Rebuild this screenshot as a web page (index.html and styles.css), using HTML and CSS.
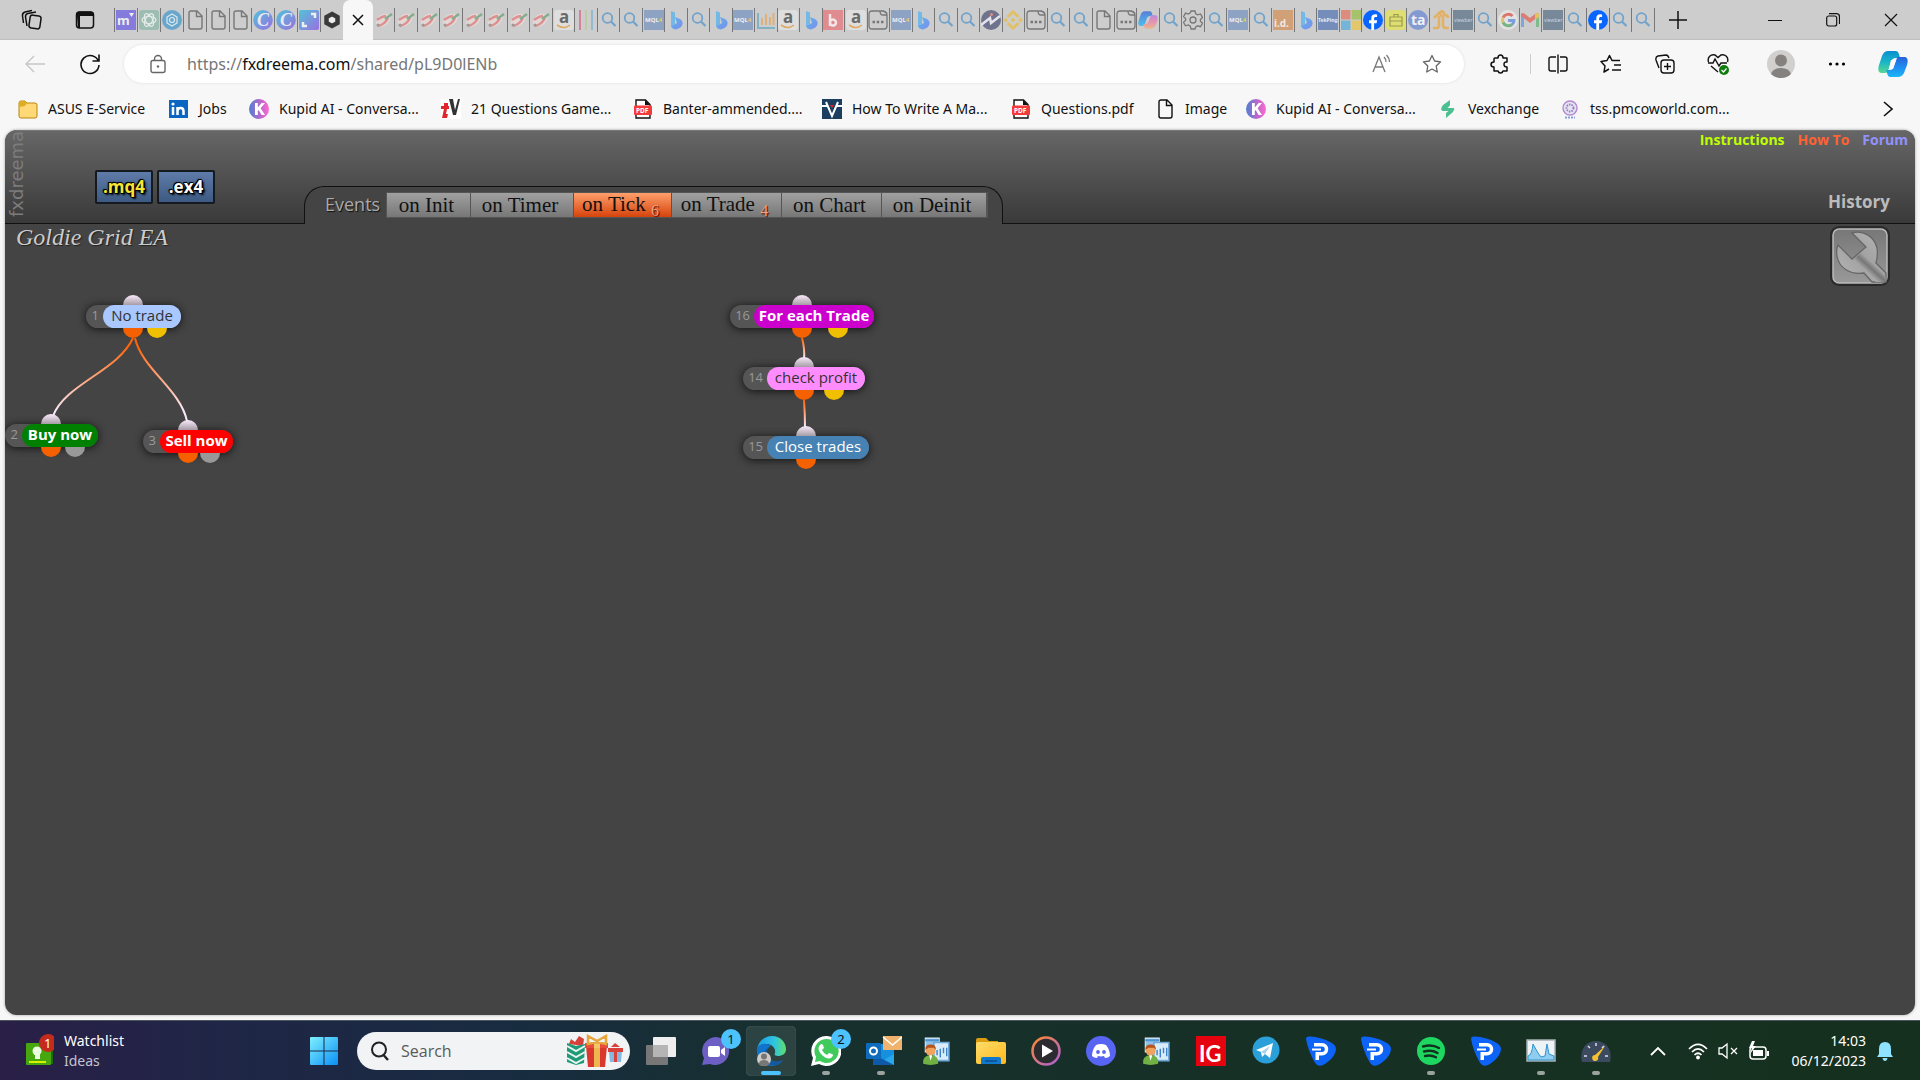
FILE: index.html
```html
<!DOCTYPE html>
<html lang="en">
<head>
<meta charset="utf-8">
<title>Goldie Grid EA - fxDreema</title>
<link rel="stylesheet" href="styles.css">
</head>
<body>
<svg class="defs" aria-hidden="true">
  <defs>
    <linearGradient id="g-bing" x1="0" y1="0" x2="1" y2="1"><stop offset="0" stop-color="#5fb4f0"/><stop offset="1" stop-color="#7a8fe8"/></linearGradient>
    <linearGradient id="g-canva" x1="0" y1="0" x2="1" y2="1"><stop offset="0" stop-color="#52c3d8"/><stop offset="1" stop-color="#9a6fe0"/></linearGradient>
    <linearGradient id="g-kupid" x1="0" y1="0" x2="1" y2="0"><stop offset="0" stop-color="#4f7fd0"/><stop offset=".6" stop-color="#c266cc"/><stop offset="1" stop-color="#ff6bd0"/></linearGradient>
    <linearGradient id="g-cop1" x1="0" y1="0" x2="0" y2="1"><stop offset="0" stop-color="#0b8fd0"/><stop offset=".5" stop-color="#19b5c8"/><stop offset="1" stop-color="#57d98e"/></linearGradient>
    <linearGradient id="g-cop2" x1="0" y1="0" x2="0" y2="1"><stop offset="0" stop-color="#2a5fd8"/><stop offset=".5" stop-color="#1d8cf0"/><stop offset="1" stop-color="#1fb6f5"/></linearGradient>
    <linearGradient id="g-cop3" x1="0" y1="0" x2="0" y2="1"><stop offset="0" stop-color="#b06fe0"/><stop offset=".5" stop-color="#f07aa8"/><stop offset="1" stop-color="#f5b070"/></linearGradient>
    <linearGradient id="g-win" x1="0" y1="0" x2="1" y2="1"><stop offset="0" stop-color="#7ef0ff"/><stop offset="1" stop-color="#0a8ff5"/></linearGradient>
    <linearGradient id="g-edge" x1="0" y1="0" x2="1" y2="0"><stop offset="0" stop-color="#1a9be8"/><stop offset=".6" stop-color="#2fc4e0"/><stop offset="1" stop-color="#5fe06a"/></linearGradient>
    <linearGradient id="g-wrench" x1="0" y1="0" x2="0" y2="1"><stop offset="0" stop-color="#777"/><stop offset="1" stop-color="#999"/></linearGradient>
    <linearGradient id="g-wrench2" x1="0" y1="1" x2="1" y2="0"><stop offset="0" stop-color="#b8b8b8"/><stop offset=".5" stop-color="#a0a0a0"/><stop offset="1" stop-color="#b8b8b8"/></linearGradient>
    <linearGradient id="g-shaft" x1="0" y1="1" x2="1" y2="0"><stop offset=".35" stop-color="#b0b0b0"/><stop offset=".5" stop-color="#777"/><stop offset=".65" stop-color="#aaa"/></linearGradient>
    <linearGradient id="g-folder" x1="0" y1="0" x2="1" y2="1"><stop offset="0" stop-color="#ffdc6b"/><stop offset="1" stop-color="#ffb91a"/></linearGradient>
    <linearGradient id="g-media" x1="0" y1="0" x2="1" y2="1"><stop offset="0" stop-color="#ff8a30"/><stop offset="1" stop-color="#a860d8"/></linearGradient>
    <linearGradient id="g-link" gradientUnits="userSpaceOnUse" x1="0" y1="114" x2="0" y2="196"><stop offset=".1" stop-color="#ff6408"/><stop offset=".9" stop-color="#fbeafb"/></linearGradient>
    <linearGradient id="g-link2" gradientUnits="userSpaceOnUse" x1="0" y1="114" x2="0" y2="135"><stop offset="0" stop-color="#ff6408"/><stop offset="1" stop-color="#fbeafb"/></linearGradient>
    <linearGradient id="g-link3" gradientUnits="userSpaceOnUse" x1="0" y1="176" x2="0" y2="203"><stop offset="0" stop-color="#ff6408"/><stop offset="1" stop-color="#fbeafb"/></linearGradient>
    <symbol id="doc" viewBox="0 0 20 20"><path d="M4 3q0-2 2-2h6l5 5v11q0 2-2 2H6q-2 0-2-2zM11.500 1v5.500h5.500" fill="none" stroke="currentColor" stroke-width="1.400"/></symbol>
    <symbol id="mag" viewBox="0 0 20 20"><circle cx="8.500" cy="8" r="4.800" fill="none" stroke="#70a3cc" stroke-width="1.800"/><path d="M12 11.500l4.500 4.500" stroke="#70a3cc" stroke-width="2.200"/></symbol>
    <symbol id="mql" viewBox="0 0 20 20"><path d="M0 0h20v20H0z" fill="#8ea2c4"/><text x="1" y="12" font-size="6" font-weight="bold" fill="#eee">MQL<tspan fill="#e6cf5a">4</tspan></text></symbol>
    <symbol id="bing" viewBox="0 0 20 20"><path d="M5 1l4 1.500v11L6 17l-1-1z" fill="#74b9e6"/><path d="M9 7l5 2q3 2 2.500 5c-.5 3-4 5-7 5.500Q6 19 5 16l6-3z" fill="url(#g-bing)"/></symbol>
    <symbol id="amz" viewBox="0 0 20 20"><rect width="20" height="20" rx="3" fill="#dedede"/><text x="5" y="13" font-size="17" font-weight="bold" fill="#6a6a6a">a</text><path d="M3 15q7 5 13 0" fill="none" stroke="#e0a861" stroke-width="1.600"/></symbol>
    <symbol id="winico" viewBox="0 0 20 20"><path d="M11 1h3q4 0 5 3.500M12 1q0 4 3 4h4M16 1.500Q19 2 19 5v11q0 3-3 3H4q-3 0-3-3V4q0-3 3-3h12" fill="none" stroke="#777" stroke-width="1.300"/><path d="M4.500 12h2.500M8.700 12h2.500M13 12h2.500" stroke="#777" stroke-width="2.400"/></symbol>
    <symbol id="pen" viewBox="0 0 20 20"><path d="M2 14C2 7 7 3 13 4l4 1c0 7-5 12-12 12z" fill="#e2d9d7"/><path d="M3 10C6 8 8 6 12 6M4 16c5-1 8-4 10-8" stroke="#de9090" stroke-width="2.400" fill="none"/><path d="M11 9l7-5" stroke="#84ad8f" stroke-width="2.600"/><circle cx="4" cy="15" r="1.500" fill="#999"/></symbol>
    <symbol id="canva" viewBox="0 0 20 20"><ellipse cx="10" cy="10" rx="9.800" ry="10" fill="url(#g-canva)"/><text x="4" y="16" font-size="18" font-weight="bold" fill="#e8e8f4" class="script">C</text></symbol>
    <symbol id="fb" viewBox="0 0 20 20"><circle cx="10" cy="10" r="10" fill="#0866ff"/><path d="M8.300 19.900v-6.700H6V10.300h2.300V8.500c0-3 1.400-4.300 4-4.300q1 0 1.800.2V7h-1.300c-1.300 0-1.700.6-1.700 1.800v1.500h3l-.5 2.900h-2.500v6.700z" fill="#fff"/></symbol>
    <symbol id="view" viewBox="0 0 20 20"><path d="M0 0h20v20H0z" fill="#778899"/><text x="1" y="12" font-size="5" fill="#d0d5da">viewber</text></symbol>
    <symbol id="copilot" viewBox="0 0 30 28"><path d="M10 1h8q2 0 3 3l1 4h-4q-4 0-5 4l-3 9q-1 2-3 2H3q-4-1-2-8l3-9Q6 1 10 1z" fill="url(#g-cop1)"/><path d="M20 27h-8q-2 0-3-4l-1-3h4q3 0 4-4l3-8q1-2 3-1h5q4 1 2 8l-3 8q-2 4-6 4z" fill="url(#g-cop2)"/><path d="M13 10h5l-3 9h-4z" fill="#fff"/></symbol>
    <symbol id="pdf" viewBox="0 0 20 20"><path d="M3 1h9.500L17 5.500V19H3z" fill="#fff" stroke="#111" stroke-width="1.400"/><path d="M12 1v5h5z" fill="#111"/><rect x="1" y="6.500" width="18" height="9.500" rx="1" fill="#f43b3b"/><text x="3" y="13.600" font-size="6.500" font-weight="bold" fill="#fff">PDF</text></symbol>
    <symbol id="kupid" viewBox="0 0 20 20"><circle cx="10" cy="10" r="10" fill="url(#g-kupid)"/><path d="M6 4h2.800v4.600L12.600 4H16l-4.400 5.300L16 16h-3.400l-3-5-.8 1v4H6z" fill="#fff"/></symbol>
    <symbol id="people" viewBox="0 0 28 28"><path d="M4 2h13v13H4z" fill="#8fc0ea" stroke="#dff0fb"/><path d="M4 3h13v2H4zM12 6h14v2H12z" fill="#4d93cf"/><path d="M12 6h14v17H12z" fill="#d8ecfa" stroke="#6fa9da" stroke-width="1.500"/><path d="M15 18v-5M18 20v-8M21 16v-5M24 19v-8" stroke="#3d82c4" stroke-width="1.300"/><circle cx="9" cy="14" r="4.500" fill="#f0a35e"/><path d="M4 13q0-5 5-5t5 5l-2-2H7z" fill="#b5531a"/><path d="M2 26q-1-8 7-8t7 8q-7 2-14 0z" fill="#71b043"/><path d="M7.500 18L9 23l1.500-5z" fill="#fff"/></symbol>
    <symbol id="pp" viewBox="0 0 30 30"><path d="M0 3q0-3 4-2.500Q15 1 24 6q6 3 6 7c0 6-7 13-13 16-4 2-7 0-9-4Q2 14 0 3z" fill="#0c63f5"/><path d="M8 7h8a6 6 0 0 1 0 12.500h-3V24H9.500v-8H16a2.600 2.600 0 0 0 0-5.500H8z" fill="#fff"/><path d="M6 12.500h9v2H6z" fill="#fff"/></symbol>
  </defs>
</svg>

<header class="browser">
  <div class="titlebar">
    <div class="title-left">
      <button class="ico" aria-label="Workspaces"><svg width="22" height="22" viewBox="0 0 22 22"><g fill="none" stroke="#111" stroke-width="1.500"><rect x="8.500" y="6.500" width="11" height="13" rx="2.500" transform="rotate(8 14 13)"/><path d="M6 17l-1.500-9q-.3-3 2.500-3.500l8-1.500M2.500 14L1.500 7Q1 4 4 3l7-1.500"/></g></svg></button>
      <button class="ico" aria-label="Tab actions"><svg width="20" height="20" viewBox="0 0 20 20"><rect x="1.500" y="2" width="17" height="16" rx="3" fill="none" stroke="#111" stroke-width="1.500"/><path d="M1 6V5q0-3.500 3.500-3.500h11Q19 1.500 19 5v1zM2 6h3v12H3z" fill="#111"/></svg></button>
    </div>
    <div class="tabs tabs-a">
      <i><svg viewBox="0 0 20 20"><path d="M0 0h20v20H0z" fill="#857bdc"/><text x="1" y="15" font-size="13" font-weight="bold" fill="#eee">m</text><path d="M13 3h5l-2.500 4z" fill="#eee"/></svg></i>
      <i><svg viewBox="0 0 20 20"><rect width="20" height="20" rx="3" fill="#9dbcb2"/><g fill="none" stroke="#e5ecea" stroke-width="1.200"><ellipse cx="10" cy="10" rx="7" ry="3.500"/><ellipse cx="10" cy="10" rx="7" ry="3.500" transform="rotate(60 10 10)"/><ellipse cx="10" cy="10" rx="7" ry="3.500" transform="rotate(120 10 10)"/></g></svg></i>
      <i><svg viewBox="0 0 20 20"><circle cx="10" cy="10" r="10" fill="#69a6cc"/><g fill="none" stroke="#dde8ef" stroke-width="1.200"><path d="M10 4l5 3v6l-5 3-5-3V7z"/><circle cx="10" cy="10" r="2.500"/></g></svg></i>
      <i><svg class="gray"><use href="#doc"/></svg></i>
      <i><svg class="gray"><use href="#doc"/></svg></i>
      <i><svg class="gray"><use href="#doc"/></svg></i>
      <i><svg><use href="#canva"/></svg></i>
      <i><svg><use href="#canva"/></svg></i>
      <i><svg viewBox="0 0 20 20"><rect width="20" height="20" rx="2" fill="url(#g-canva)"/><path d="M12 4h4v4M4 12v4h4" fill="none" stroke="#eee" stroke-width="2.500"/></svg></i>
      <i><svg viewBox="0 0 20 20"><path d="M10 4l5.500 3v6L10 16l-5.500-3V7z" fill="#eee" stroke="#3a3a3a" stroke-width="4.500"/></svg></i>
    </div>
    <div class="tab-active"><button class="ico" aria-label="Close tab"><svg width="12" height="12" viewBox="0 0 12 12"><path d="M1 1l10 10M11 1L1 11" stroke="#111" stroke-width="1.500"/></svg></button></div>
    <div class="tabs tabs-b">
      <i><svg><use href="#pen"/></svg></i>
      <i><svg><use href="#pen"/></svg></i>
      <i><svg><use href="#pen"/></svg></i>
      <i><svg><use href="#pen"/></svg></i>
      <i><svg><use href="#pen"/></svg></i>
      <i><svg><use href="#pen"/></svg></i>
      <i><svg><use href="#pen"/></svg></i>
      <i><svg><use href="#pen"/></svg></i>
      <i><svg><use href="#amz"/></svg></i>
      <i><svg viewBox="0 0 20 20"><path d="M4 0v20" stroke="#d8688c" stroke-width="1.500"/><path d="M10 0v20" stroke="#b5cf98" stroke-width="1.500"/><path d="M16 0v20" stroke="#7eb5d4" stroke-width="1.500"/></svg></i>
      <i><svg><use href="#mag"/></svg></i>
      <i><svg><use href="#mag"/></svg></i>
      <i><svg><use href="#mql"/></svg></i>
      <i><svg><use href="#bing"/></svg></i>
      <i><svg><use href="#mag"/></svg></i>
      <i><svg><use href="#bing"/></svg></i>
      <i><svg><use href="#mql"/></svg></i>
      <i><svg viewBox="0 0 20 20"><path d="M2 3v15h17" fill="none" stroke="#80b2c4" stroke-width="2"/><path d="M6 15V8M10 15V4M14 15V7M17.500 15V3" stroke="#ddb07c" stroke-width="2"/></svg></i>
      <i><svg><use href="#amz"/></svg></i>
      <i><svg><use href="#bing"/></svg></i>
      <i><svg viewBox="0 0 20 20"><path d="M0 0h20v20H0z" fill="#df8b90"/><path d="M7 4v12M7 12.500a3 3 0 1 1 0 .1" fill="none" stroke="#f2e6e6" stroke-width="2.500"/></svg></i>
      <i><svg><use href="#amz"/></svg></i>
      <i><svg><use href="#winico"/></svg></i>
      <i><svg><use href="#mql"/></svg></i>
      <i><svg><use href="#bing"/></svg></i>
      <i><svg><use href="#mag"/></svg></i>
      <i><svg><use href="#mag"/></svg></i>
      <i><svg viewBox="0 0 20 20"><circle cx="10" cy="10" r="10" fill="#70738d"/><path d="M0 15l9-7 1 5 9-7" fill="none" stroke="#e4e4ea" stroke-width="2.500"/><circle cx="10.500" cy="4.500" r="1.500" fill="#e08c7c"/></svg></i>
      <i><svg viewBox="0 0 20 20"><path d="M10 7.500l2.500 2.500-2.500 2.500L7.500 10zM2.500 7.500L5 10l-2.500 2.500L0 10zM17.500 7.500L20 10l-2.500 2.500L15 10z" fill="#e0c069"/><path d="M4.500 7L10 1.800 15.500 7M4.500 13l5.500 5.200 5.500-5.200" fill="none" stroke="#e0c069" stroke-width="3"/></svg></i>
      <i><svg><use href="#winico"/></svg></i>
      <i><svg><use href="#mag"/></svg></i>
      <i><svg><use href="#mag"/></svg></i>
      <i><svg class="gray"><use href="#doc"/></svg></i>
      <i><svg><use href="#winico"/></svg></i>
      <i><svg class="faded" viewBox="0 0 30 28"><path d="M10 1h8q2 0 3 3l1 4h-4q-4 0-5 4l-3 9q-1 2-3 2H3q-4-1-2-8l3-9Q6 1 10 1z" fill="url(#g-cop2)"/><path d="M20 27h-8q-2 0-3-4l-1-3h4q3 0 4-4l3-8q1-2 3-1h5q4 1 2 8l-3 8q-2 4-6 4z" fill="url(#g-cop3)"/></svg></i>
      <i><svg><use href="#mag"/></svg></i>
      <i><svg viewBox="0 0 20 20"><path d="M8 1h4l.7 2.800 2 1.100 2.800-.9 2 3.500-2.100 2v1.700l2.100 2-2 3.500-2.800-.9-2 1.200L12 19H8l-.7-2.900-2-1.200-2.800.9-2-3.500 2.100-2V8.600l-2.100-2 2-3.500 2.800.9 2-1.100z" fill="none" stroke="#777" stroke-width="1.300"/><circle cx="10" cy="10" r="3" fill="none" stroke="#777" stroke-width="1.300"/></svg></i>
      <i><svg><use href="#mag"/></svg></i>
      <i><svg><use href="#mql"/></svg></i>
      <i><svg><use href="#mag"/></svg></i>
      <i><svg viewBox="0 0 20 20"><path d="M0 0h20v20H0z" fill="#d1a077"/><text x="1" y="17" font-size="10" font-weight="bold" fill="#f0e8e0">i.d.</text></svg></i>
      <i><svg><use href="#bing"/></svg></i>
      <i><svg viewBox="0 0 20 20"><path d="M0 0h20v20H0z" fill="#748dbb"/><text x="0" y="12" font-size="5" font-weight="bold" fill="#e8ecf4">TekPing</text></svg></i>
      <i><svg viewBox="0 0 20 20"><path d="M0 0h9.500v9.500H0z" fill="#db8c7c"/><path d="M10.500 0H20v9.500h-9.500z" fill="#a6c36b"/><path d="M0 10.500h9.500V20H0z" fill="#74b4d6"/><path d="M10.500 10.500H20V20h-9.500z" fill="#e3c76c"/></svg></i>
      <i><svg><use href="#fb"/></svg></i>
      <i><svg viewBox="0 0 20 20"><rect width="20" height="20" rx="4" fill="#dede72"/><path d="M4 7h12v9H4zM8 7V4.500h4V7M4 11h12" fill="none" stroke="#9a9a50" stroke-width="1.200"/></svg></i>
      <i><svg viewBox="0 0 20 20"><circle cx="10" cy="10" r="10" fill="#839bd2"/><text x="3" y="15" font-size="14" font-weight="bold" fill="#f0f0f4">ta</text></svg></i>
      <i><svg viewBox="0 0 20 20"><path d="M2 18h4q2 0 2-3V6M3 8l5-5 4 4M12 5v10q0 3 3 3h3M12 5h2q3 0 3 3M8 3l3-2 3 3" fill="none" stroke="#e2b165" stroke-width="2.600"/></svg></i>
      <i><svg><use href="#view"/></svg></i>
      <i><svg><use href="#mag"/></svg></i>
      <i><svg viewBox="0 0 20 20"><circle cx="10" cy="10" r="10" fill="#e2e2e2"/><g fill="none" stroke-width="3"><path d="M14.500 6A6 6 0 0 0 5 7.500" stroke="#d9756c"/><path d="M5 7.500a6 6 0 0 0 0 5" stroke="#e3c166"/><path d="M5 12.500a6 6 0 0 0 9 2" stroke="#77b384"/><path d="M14 14.500q2-1.500 2-4h-6" stroke="#7b9fd9"/></g></svg></i>
      <i><svg viewBox="0 0 20 20"><path d="M1 5v12h3V8z" fill="#7ea5dc"/><path d="M16 8v9h3V5z" fill="#7ebc8c"/><path d="M1 6V4q2-2 4 0l5 4 5-4q2-2 4 0v2l-9 7z" fill="#dc7d75"/><path d="M15 4q2-2 4 0v3l-4 3z" fill="#e3c060"/></svg></i>
      <i><svg><use href="#view"/></svg></i>
      <i><svg><use href="#mag"/></svg></i>
      <i><svg><use href="#fb"/></svg></i>
      <i><svg><use href="#mag"/></svg></i>
      <i><svg><use href="#mag"/></svg></i>
    </div>
    <button class="ico new-tab" aria-label="New tab"><svg width="18" height="18" viewBox="0 0 18 18"><path d="M9 0v18M0 9h18" stroke="#111" stroke-width="1.500"/></svg></button>
    <div class="winctl">
      <button class="ico" aria-label="Minimise"><svg width="14" height="14" viewBox="0 0 14 14"><path d="M0 7.500h14" stroke="#111"/></svg></button>
      <button class="ico" aria-label="Restore"><svg width="14" height="14" viewBox="0 0 14 14"><rect x=".7" y="3" width="10" height="10" rx="2" fill="none" stroke="#111" stroke-width="1.200"/><path d="M3 .7h7.500q3 0 3 3V11" fill="none" stroke="#111" stroke-width="1.200"/></svg></button>
      <button class="ico" aria-label="Close"><svg width="14" height="14" viewBox="0 0 14 14"><path d="M1 1l12 12M13 1L1 13" stroke="#111" stroke-width="1.200"/></svg></button>
    </div>
  </div>

  <div class="toolbar">
    <div class="nav">
      <button class="ico" aria-label="Back"><svg width="20" height="18" viewBox="0 0 20 18"><path d="M20 9H1M9 1L1 9l8 8" fill="none" stroke="#c6c6c6" stroke-width="1.400"/></svg></button>
      <button class="ico" aria-label="Refresh"><svg width="22" height="22" viewBox="0 0 22 22"><path d="M19.500 8.500A9 9 0 1 0 20 12M20 1.500V8h-6.500" fill="none" stroke="#111" stroke-width="1.600"/></svg></button>
    </div>
    <div class="urlbar">
      <svg width="16" height="20" viewBox="0 0 16 20"><rect x="1" y="6.500" width="14" height="12" rx="2" fill="none" stroke="#666" stroke-width="1.400"/><path d="M4.500 6.500V5a3.500 3.500 0 0 1 7 0v1.500" fill="none" stroke="#666" stroke-width="1.400"/><circle cx="8" cy="12.500" r="1.200" fill="#666"/></svg>
      <a class="url" href="#">https://<b>fxdreema.com</b>/shared/pL9D0lENb</a>
      <button class="ico" aria-label="Read aloud"><svg width="20" height="20" viewBox="0 0 20 20"><path d="M1 18L7 3l6 15M3 13h8M12 3q2 2 2 5M14.500 1q3 3 3 7" fill="none" stroke="#777" stroke-width="1.300"/></svg></button>
      <button class="ico" aria-label="Favourite"><svg width="20" height="20" viewBox="0 0 20 20"><path d="M10 1.500l2.600 5.500 6 .8-4.400 4.200 1.100 6-5.300-3-5.300 3 1.100-6L1.400 7.800l6-.8z" fill="none" stroke="#666" stroke-width="1.300" stroke-linejoin="round"/></svg></button>
    </div>
    <div class="tools">
      <button class="ico" aria-label="Extensions"><svg width="20" height="20" viewBox="0 0 20 20"><path d="M5 4h3q0-3 2.500-3T13 4h4v4q-3-.5-3 2.300T17 13v4h-4q-.5 2-2.500 2T8 17H4v-4q-3 0-3-2.500T4 8V5q0-1 1-1z" fill="none" stroke="#111" stroke-width="1.500" stroke-linejoin="round"/></svg></button>
      <span class="vline"></span>
      <button class="ico" aria-label="Split screen"><svg width="20" height="20" viewBox="0 0 20 20"><path d="M8 3H3Q1 3 1 5v10q0 2 2 2h5M12 3h5q2 0 2 2v10q0 2-2 2h-5M10 .5v19" fill="none" stroke="#111" stroke-width="1.400"/></svg></button>
      <button class="ico" aria-label="Favourites"><svg width="22" height="20" viewBox="0 0 22 20"><path d="M9 15l-5 3 1-6-4-4.500 6-1 2.500-5 2.500 5h8M14 11h7M12 16h9" fill="none" stroke="#111" stroke-width="1.500" stroke-linejoin="round"/></svg></button>
      <button class="ico" aria-label="Collections"><svg width="20" height="20" viewBox="0 0 20 20"><path d="M4 14L1 6q-.7-3 2-4l8-1q2 0 3 3" fill="none" stroke="#111" stroke-width="1.400"/><rect x="6" y="6" width="13" height="13" rx="3" fill="none" stroke="#111" stroke-width="1.400"/><path d="M12.500 9v7M9 12.500h7" stroke="#111" stroke-width="1.400"/></svg></button>
      <button class="ico" aria-label="Browser essentials"><svg width="22" height="22" viewBox="0 0 22 22"><path d="M1.500 9C0 4 4 1 8 2l3 2.500L14 2c4-1 8 2 6.500 7M1 10h5l2-4 4 7 2-3h6M4 13l7 6" fill="none" stroke="#111" stroke-width="1.400"/><circle cx="17" cy="17" r="5" fill="#107c10"/><path d="M14.500 17l2 2 3-3.500" fill="none" stroke="#fff" stroke-width="1.200"/></svg></button>
      <button class="ico avatar" aria-label="Profile"><svg width="28" height="28" viewBox="0 0 28 28"><circle cx="14" cy="14" r="14" fill="#d2d0ce"/><circle cx="14" cy="10.500" r="6" fill="#84817f"/><path d="M4 24q2-6 10-6t10 6q-4 4-10 4t-10-4z" fill="#84817f"/></svg></button>
      <button class="ico" aria-label="Settings and more"><svg width="18" height="6" viewBox="0 0 18 6"><circle cx="2.500" cy="3" r="1.600"/><circle cx="9" cy="3" r="1.600"/><circle cx="15.500" cy="3" r="1.600"/></svg></button>
      <button class="ico" aria-label="Copilot"><svg width="30" height="28"><use href="#copilot"/></svg></button>
    </div>
  </div>

  <nav class="bookmarks">
    <a href="#" class="bm w1"><svg viewBox="0 0 20 20"><path d="M1 4q0-2 2-2h4l2 2h8q2 0 2 2v11q0 2-2 2H3q-2 0-2-2z" fill="#ffd978" stroke="#b8860b"/><path d="M1 8V4q0-2 2-2h4l2 2-2 3z" fill="#e0ac20"/></svg>ASUS E-Service</a>
    <a href="#" class="bm w2"><svg viewBox="0 0 20 20"><rect y="1" width="19" height="18" fill="#0a66c2"/><path d="M4 8v8M8.500 8v8M8.500 12q0-3 3-3t3 3v4" stroke="#fff" stroke-width="2.500" fill="none"/><circle cx="4" cy="5" r="1.600" fill="#fff"/></svg>Jobs</a>
    <a href="#" class="bm w3"><svg><use href="#kupid"/></svg>Kupid AI - Conversa...</a>
    <a href="#" class="bm w4"><svg viewBox="0 0 20 20"><path d="M0 0h20v20H0z" fill="#fff"/><path d="M0 7h8v3H6l-1 5h2l-1 4H1l2-9H0zM3 4h4v3H3z" fill="#e0262c"/><path d="M8 0h4l2 11 3-11h2l-4 16h-3z" fill="#333"/></svg>21 Questions Game...</a>
    <a href="#" class="bm w5"><svg><use href="#pdf"/></svg>Banter-ammended....</a>
    <a href="#" class="bm w6"><svg viewBox="0 0 20 20"><path d="M0 0h20v20H0z" fill="#1c3f60"/><path d="M4 3l6 14 6-14M0 7h5M15 7h5" fill="none" stroke="#fff" stroke-width="2"/><path d="M8 6h4l-2 3z" fill="#e22"/></svg>How To Write A Ma...</a>
    <a href="#" class="bm w7"><svg><use href="#pdf"/></svg>Questions.pdf</a>
    <a href="#" class="bm w8"><svg><use href="#doc"/></svg>Image</a>
    <a href="#" class="bm w3"><svg><use href="#kupid"/></svg>Kupid AI - Conversa...</a>
    <a href="#" class="bm w9"><svg viewBox="0 0 20 20"><path d="M12 1v5l-4 3h8q0 2-1 4l-7 6v-5l4-3H3q0-3 2-5z" fill="#4bbf90"/><path d="M11 6l-5 5h8l-5 4" fill="none" stroke="#4bbf90" stroke-width="2"/></svg>Vexchange</a>
    <a href="#" class="bm w10"><svg viewBox="0 0 20 20"><circle cx="10" cy="9" r="7" fill="#e7e2f2" stroke="#b38ad0" stroke-width="1.400"/><circle cx="10" cy="9" r="3.500" fill="none" stroke="#8b7fc0" stroke-width="1.800" stroke-dasharray="1.500 1"/><path d="M5 18.500h10" stroke="#8b9fd8" stroke-width="2" stroke-dasharray="2 1"/></svg>tss.pmcoworld.com...</a>
    <button class="ico more" aria-label="More bookmarks"><svg width="10" height="16" viewBox="0 0 10 16"><path d="M1 1l8 7-8 7" fill="none" stroke="#111" stroke-width="1.600"/></svg></button>
  </nav>
</header>

<main class="page">
  <div class="app-head">
    <span class="brand">fxdreema</span>
    <div class="exports"><button class="exp mq">.mq4</button><button class="exp">.ex4</button></div>
    <div class="events">
      <span class="ev-label">Events</span>
      <div class="ev-tabs">
        <button class="e1">on Init</button><button class="e2">on Timer</button><button class="e3 on">on Tick <sub>6</sub></button><button class="e4">on Trade <sub>4</sub></button><button class="e5">on Chart</button><button class="e6">on Deinit</button>
      </div>
    </div>
    <div class="head-right">
      <div class="links"><a class="lk1" href="#">Instructions</a><a class="lk2" href="#">How To</a><a class="lk3" href="#">Forum</a></div>
      <a class="history" href="#">History</a>
    </div>
  </div>
  <div class="canvas">
    <div class="canvas-top">
      <h1>Goldie Grid EA</h1>
      <button class="ico" aria-label="Project options"><svg width="60" height="60" viewBox="0 0 60 60"><rect x="0" y="0" width="60" height="60" rx="9" fill="#2a2a2a"/><rect x="3" y="3" width="54" height="54" rx="6" fill="url(#g-wrench)" stroke="#bbb" stroke-width="1.500"/><path d="M22 7c11-3 22 3 25 15q1 8-1 15l10 10v9H42L34 47C20 49 9 42 7 30q-1-7 1-11l14 14 14-12z" fill="url(#g-wrench2)" stroke="#666" stroke-width="1.300"/><path d="M24 33l7-6 25 24v5H46z" fill="url(#g-shaft)"/></svg></button>
    </div>
    <svg class="wires" aria-hidden="true"><g fill="none" stroke-width="2">
      <path d="M128 114C113 147 60 160 48 192" stroke="url(#g-link)"/>
      <path d="M130 114C137 145 175 165 182 197" stroke="url(#g-link)"/>
      <path d="M797 114Q800 125 799 136" stroke="url(#g-link2)"/>
      <path d="M799 176Q800 190 800 204" stroke="url(#g-link3)"/></g></svg>
    <div class="node n1"><span class="num">1</span><span class="lab">No trade</span><i class="in"></i><i class="out"></i><i class="alt"></i></div>
    <div class="node n2"><span class="num">2</span><span class="lab">Buy now</span><i class="in"></i><i class="out"></i><i class="alt off"></i></div>
    <div class="node n3"><span class="num">3</span><span class="lab">Sell now</span><i class="in"></i><i class="out"></i><i class="alt off"></i></div>
    <div class="node n16"><span class="num">16</span><span class="lab">For each Trade</span><i class="in"></i><i class="out"></i><i class="alt"></i></div>
    <div class="node n14"><span class="num">14</span><span class="lab">check profit</span><i class="in"></i><i class="out"></i><i class="alt"></i></div>
    <div class="node n15"><span class="num">15</span><span class="lab">Close trades</span><i class="in"></i><i class="out"></i></div>
  </div>
</main>

<footer class="taskbar">
  <button class="widget"><svg width="28" height="34" viewBox="0 0 28 34"><path d="M2 11h22l3 3v16H5z" fill="#1f6b12"/><rect y="9" width="25" height="22" rx="1" fill="#46a80e"/><circle cx="11" cy="17" r="4.500" fill="#eaffdf"/><path d="M9 19h5v6H9z" fill="#eaffdf"/><path d="M3 28h17" stroke="#d8f000" stroke-width="2"/><circle cx="22" cy="9" r="9" fill="#c42b1c"/></svg><b>1</b><span>Watchlist<small>Ideas</small></span></button>
  <button class="ico start" aria-label="Start"><svg width="30" height="30" viewBox="0 0 30 30"><path d="M1 2q0-1 1-1h12.500v13.500H1zM15.500 1H28q1 0 1 1v12.500H15.500zM1 15.500h13.500V29H2q-1 0-1-1zM15.500 15.500H29V28q0 1-1 1H15.500z" fill="url(#g-win)"/></svg></button>
  <label class="search"><svg width="20" height="20" viewBox="0 0 20 20"><circle cx="9" cy="8.500" r="7" fill="none" stroke="#222" stroke-width="2"/><path d="M13.500 14l4.500 5" stroke="#222" stroke-width="2.400"/></svg><input type="text" placeholder="Search" aria-label="Search">
    <svg width="58" height="34" viewBox="0 0 58 34"><path d="M3 10l2-5 4 3 4-6 5 3-1 7z" fill="#d8413a"/><path d="M1 9l9 3 9-2-1 19-8 2-9-3z" fill="#1f9a78"/><path d="M1 12l9 5 9-5M1 18l9 5 9-5M1 24l9 5 9-5" stroke="#e8f4ee" stroke-width="2" fill="none"/><path d="M20 12h21l-2 21H22z" fill="#d8382e"/><path d="M28 12h6v21h-6z" fill="#efb64f"/><path d="M19 9h23v5H19z" fill="#e84c3d"/><path d="M28 9h6v5h-6z" fill="#f5c766"/><path d="M22 2l9 5 9-5v8l-9-2-9 2z" fill="none" stroke="#e5a63c" stroke-width="2.500"/><path d="M43 17h13l-1 11H44z" fill="#84b9e4"/><path d="M42 14h15v4H42z" fill="#d8413a"/><path d="M48 17h3v11h-3z" fill="#d8413a"/><path d="M45 13l4-4 5 4z" fill="#d8413a"/></svg></label>
  <div class="apps">
    <button class="app" aria-label="Task view"><svg viewBox="0 0 30 30"><rect x="7" y="1" width="23" height="20" rx="1" fill="#eee"/><rect y="9" width="22" height="20" rx="1" fill="#777"/><path d="M7 9h15v12H7z" fill="#b5b5b5"/></svg></button>
    <button class="app" aria-label="Chat"><svg viewBox="0 0 30 30"><path d="M15 1a14 14 0 1 1-6 27l-8 1 2-7A14 14 0 0 1 15 1z" fill="#6d5fc4"/><rect x="7" y="10" width="12" height="11" rx="2" fill="#fff"/><path d="M20 14l4-3v9l-4-3z" fill="#fff"/></svg><b>1</b></button>
    <button class="app cur" aria-label="Edge"><svg viewBox="0 0 30 30"><path d="M1 14C2 5 9 0 16 0c9 0 14 7 14 13 0 5-4 7-8 7-3 0-4-1-3-3 1-6-4-9-9-9S2 10 1 14z" fill="url(#g-edge)"/><path d="M1 13c2-5 9-7 14-3-7 3-8 17 4 18l8-4C23 31 12 32 6 26Q0 21 1 13z" fill="#1173c9"/><path d="M12 12c-3 8 4 17 15 12-5 7-13 7-18 2-3-4-2-11 3-14z" fill="#155a9e"/><circle cx="8" cy="23" r="7" fill="#cfcac5"/><circle cx="8" cy="20.500" r="3" fill="#777"/><path d="M3 27q1-3 5-3t5 3-5 3-5-3z" fill="#777"/></svg></button>
    <button class="app run" aria-label="WhatsApp"><svg viewBox="0 0 30 30"><path d="M15 0a15 15 0 1 1-7 28l-8 2 2-8A15 15 0 0 1 15 0z" fill="#fff"/><path d="M15 3a12 12 0 1 1-6 22l-5 1 1-5A12 12 0 0 1 15 3z" fill="#3fca5b"/><path d="M9 9q2-2 3 0l1 3-2 2q2 4 5 5l2-2 3 1q2 1 0 3c-3 3-7 1-10-2s-5-7-2-10z" fill="#fff"/></svg><b>2</b></button>
    <button class="app run wide" aria-label="Outlook"><svg viewBox="0 0 36 30"><path d="M7 8h21v21H7z" fill="#1490df"/><path d="M7 18l11 6 10-6v11H7z" fill="#28a8ea"/><path d="M7 18l21 11H7z" fill="#0f5aa8"/><rect y="7" width="15" height="16" rx="1" fill="#0f6cbd"/><circle cx="7.500" cy="15" r="3.500" fill="none" stroke="#fff" stroke-width="2"/><path d="M17 0h19v14H17z" fill="#f0b36d"/><path d="M17 1l9.500 8L36 1" stroke="#fff" stroke-width="1.500" fill="none"/></svg></button>
    <button class="app" aria-label="Share monitor"><svg><use href="#people"/></svg></button>
    <button class="app" aria-label="File Explorer"><svg viewBox="0 0 30 30"><path d="M0 4q0-2 2-2h8l3 3h9v8H0z" fill="#dc9c10"/><rect y="6" width="30" height="22" rx="2" fill="url(#g-folder)"/><path d="M5 28v-5q0-2 2-2h16q2 0 2 2v5z" fill="#1278cc"/><path d="M9 25h12" stroke="#0a4c90" stroke-width="1.500"/></svg></button>
    <button class="app" aria-label="Media Player"><svg viewBox="0 0 30 30"><circle cx="15" cy="15" r="13.500" fill="#2c2c30" stroke="url(#g-media)" stroke-width="2.500"/><path d="M11 8.500L22 15l-11 6.500z" fill="#fff"/></svg></button>
    <button class="app" aria-label="Discord"><svg viewBox="0 0 30 30"><circle cx="15" cy="15" r="15" fill="#5865f2"/><path d="M10 9q5-2 10 0 4 5 4 11-2 2-5 2l-1-2q-3 .8-6 0l-1 2q-3 0-5-2 0-6 4-11z" fill="#fff"/><circle cx="12" cy="16" r="1.900" fill="#5865f2"/><circle cx="18" cy="16" r="1.900" fill="#5865f2"/></svg></button>
    <button class="app" aria-label="Share monitor 2"><svg><use href="#people"/></svg></button>
    <button class="app" aria-label="IG"><svg viewBox="0 0 30 30"><path d="M0 0h30v30H0z" fill="#e4030f"/><text x="3" y="26" font-size="22" font-weight="bold" fill="#fff" class="lato">IG</text></svg></button>
    <button class="app" aria-label="Telegram"><svg viewBox="0 0 30 30"><circle cx="15" cy="14" r="13.500" fill="#2a9fd8"/><path d="M5 14l17-7-3 15-5-4-3 3-1-5z" fill="#fff"/><path d="M10 16l9-6-5 8z" fill="#a9d3ea"/></svg></button>
    <button class="app" aria-label="Platform 1"><svg><use href="#pp"/></svg></button>
    <button class="app" aria-label="Platform 2"><svg><use href="#pp"/></svg></button>
    <button class="app run" aria-label="Spotify"><svg viewBox="0 0 30 30"><circle cx="15" cy="15" r="14" fill="#1ed760"/><path d="M7 10.500q9-2.500 16 1.500M8 15.500q8-2 13.500 1.500M9 20q6-1.500 11 1.300" fill="none" stroke="#10331f" stroke-width="2.400" stroke-linecap="round"/></svg></button>
    <button class="app" aria-label="Platform 3"><svg><use href="#pp"/></svg></button>
    <button class="app run" aria-label="Resource Monitor"><svg viewBox="0 0 30 30"><path d="M1 4h28v21H1z" fill="#eef3f6" stroke="#a8b0b5" stroke-width="1.500"/><path d="M2 20q4-1 5-12l5 9 3 4 4-1 2-12 2 10 5 2v4H2z" fill="#8fcdf0" stroke="#2f93cc"/></svg></button>
    <button class="app run" aria-label="Speed test"><svg viewBox="0 0 30 30"><path d="M1 26C-2 14 5 5 15 5s17 9 14 21z" fill="#3b4a5e"/><path d="M15 7v3M7 10l2 2M23 10l-2 2M3 20h3M24 20h3" stroke="#dde" stroke-width="1.500"/><path d="M24 10l-7 11a3 3 0 1 1-3-2z" fill="#f5c02e"/></svg></button>
  </div>
  <div class="tray">
    <svg width="16" height="10" viewBox="0 0 16 10"><path d="M1 9l7-7 7 7" fill="none" stroke="#fff" stroke-width="1.800"/></svg>
    <svg width="20" height="18" viewBox="0 0 20 18"><path d="M1 7q9-9 18 0M4 10q6-6 12 0M6.500 13q3.500-3.500 7 0" fill="none" stroke="#fff" stroke-width="1.700"/><circle cx="10" cy="15.500" r="1.900" fill="#fff"/></svg>
    <svg width="20" height="18" viewBox="0 0 20 18"><path d="M1 6h3l5-4v14l-5-4H1zM13 6l6 6M19 6l-6 6" fill="none" stroke="#fff" stroke-width="1.300"/></svg>
    <svg width="22" height="20" viewBox="0 0 22 20"><rect x="2" y="6" width="16" height="12" rx="3" fill="none" stroke="#fff" stroke-width="1.500"/><path d="M5 9h10v6H5zM19 10h2v5h-2zM4 0L1 7h3l-2 6 6-8H5l2-5z" fill="#fff"/></svg>
    <time>14:03<br>06/12/2023</time>
    <svg width="18" height="20" viewBox="0 0 18 20"><path d="M9 1q6 0 6 7v5l2 3H1l2-3V8q0-7 6-7zM6.500 17h5q-.5 3-2.500 3t-2.500-3z" fill="#8fe3ff"/></svg>
  </div>
</footer>
</body>
</html>
```
FILE: styles.css
```css
* { box-sizing: border-box; }
body {
  margin: 0;
  min-height: 100vh;
  display: flex;
  flex-direction: column;
  background: #f7f7f7;
  font-family: "Noto Sans", "Open Sans", sans-serif;
  color: #111;
  overflow: hidden;
}
a { text-decoration: none; color: inherit; }
button { font: inherit; border: 0; padding: 0; margin: 0; background: none; }
svg { display: block; flex: none; }
.defs { position: absolute; width: 0; height: 0; }
.script { font-family: "Liberation Serif", serif; font-style: italic; }
.lato { font-family: Lato, sans-serif; }
.ico { display: flex; align-items: center; justify-content: center; }

/* window title bar */
.titlebar { display: flex; height: 40px; background: #cdcdcd; border-bottom: 1px solid #bfbfbf; }
.title-left { width: 114px; display: flex; align-items: center; gap: 32px; padding-left: 21px; }
.tabs { display: flex; align-items: center; font-style: normal; }
.tabs i { flex: 1; display: flex; justify-content: center; height: 24px; align-items: center; border-right: 1px solid #777; font-style: normal; }
.tabs svg { width: 20px; height: 20px; }
.tabs-a { width: 229px; }
.tabs-a i:first-child { border-left: 1px solid #777; }
.tabs-a i:last-child { border-right: 0; }
.tabs-b { width: 1282px; }
.gray { color: #777; }
.faded { opacity: .7; }
.tab-active { width: 30px; height: 40px; background: #f7f7f7; border-radius: 7px 7px 0 0; display: flex; justify-content: center; align-items: center; }
.new-tab { width: 46px; }
.winctl { flex: 1; display: flex; justify-content: flex-end; gap: 44px; padding-right: 22px; }

/* address row */
.toolbar { display: flex; align-items: center; height: 48px; }
.nav { width: 124px; display: flex; align-items: center; gap: 34px; padding-left: 25px; }
.urlbar { flex: 1; height: 38px; display: flex; align-items: center; gap: 30px; padding: 0 22px 0 26px; background: #fff; border-radius: 19px; box-shadow: 0 0 3px #ddd; }
.url { flex: 1; margin-left: -9px; font-size: 16px; line-height: 24px; color: #767676; }
.url b { font-weight: 400; color: #111; }
.tools { width: 456px; display: flex; align-items: center; justify-content: space-between; padding: 0 12px 0 26px; }
.vline { width: 1px; height: 20px; background: #ccc; margin: 0 -16px 0 -12px; }
.avatar { margin-left: 6px; }

.bookmarks { display: flex; align-items: center; height: 42px; padding-left: 18px; font-size: 14px; line-height: 20px; }
.bm { display: flex; align-items: center; gap: 10px; white-space: nowrap; }
.bm svg { width: 20px; height: 20px; }
.w1 { width: 151px; }
.w2 { width: 80px; }
.w3 { width: 192px; }
.w4 { width: 192px; }
.w5, .w6 { width: 189px; }
.w7 { width: 144px; }
.w8 { width: 91px; }
.w9 { width: 122px; }
.w10 { flex: 1; }
.more { margin-right: 27px; }

/* editor */
.page { flex: 1; display: flex; flex-direction: column; margin: 0 5px 5px; background: #444; border-radius: 12px; overflow: hidden; box-shadow: 0 0 3px #999; font-family: "Open Sans", "Noto Sans", sans-serif; }
.app-head { display: flex; height: 94px; background: linear-gradient(#666, #3a3a3a) padding-box; border-bottom: 1px solid #111; border-top: 1px solid #777; }
.brand { width: 24px; writing-mode: vertical-rl; transform: rotate(180deg); text-align: right; font-family: "DejaVu Sans", sans-serif; font-size: 18px; line-height: 24px; color: #7c7c7c; }
.exports { width: 275px; padding: 39px 0 0 66px; display: flex; gap: 4px; }
.exp { width: 58px; height: 34px; border: 2px solid #151a20; border-radius: 2px; background: linear-gradient(#5f7ba8, #3c5a82); color: #fff; font-size: 17px; font-weight: 700; line-height: 26px; text-shadow: 1px 0 #000, -1px 0 #000, 0 1px #000, 0 -1px #000, 0 0 3px #000, 1px 1px #000, -1px -1px #000, 2px 2px 2px #000; }
.mq { color: #f5e636; }
.events { width: 699px; height: 38px; margin: 55px 0 -1px; display: flex; gap: 7px; padding: 5px 0 0 20px; background: #444; border: 1px solid #111; border-bottom: 0; border-radius: 20px 20px 0 0; }
.ev-label { width: 54px; color: #aaa; font-size: 18px; line-height: 24px; text-shadow: 1px 1px 1px #111; }
.ev-tabs { display: flex; height: 26px; border: 1px solid #555; font-family: Georgia, "Liberation Serif", serif; font-size: 21px; }
.ev-tabs button { background: linear-gradient(#a0a0a0, #777); border-right: 1px solid #555; padding-right: 4px; color: #111; line-height: 23px; white-space: nowrap; }
.ev-tabs .on { background: linear-gradient(#ff9f6b, #d6430c); }
.ev-tabs sub { font-size: 16px; line-height: 10px; color: #f0a078; text-shadow: 1px 1px 1px #400; }
.e1 { width: 84px; }
.e2 { width: 103px; }
.e3 { width: 98px; }
.e4 { width: 110px; }
.e5 { width: 100px; }
.e6 { width: 105px; }
.head-right { flex: 1; display: flex; flex-direction: column; align-items: flex-end; gap: 40px; font-weight: 700; }
.links { display: flex; gap: 13px; padding-right: 7px; font-size: 14px; line-height: 18px; }
.lk1 { color: #bfff00; }
.lk2 { color: #ff6332; }
.lk3 { color: #9292ff; }
.history { padding-right: 25px; font-size: 17px; line-height: 26px; color: #bbb; }
.canvas { position: relative; flex: 1; }
.canvas-top { display: flex; justify-content: space-between; padding: 2px 25px 0 11px; }
h1 { margin: 0; font: italic 24px/22px "Monotype Corsiva", "Liberation Serif", serif; color: #ccc; text-shadow: 1px 1px 1px #222; }

/* block diagram */
.wires { position: absolute; left: 0; top: 0; width: 100%; height: 100%; }
.node { position: absolute; height: 23px; display: flex; border-radius: 12px; background: #555; box-shadow: 0 1px 8px #111; font-size: 15px; line-height: 20px; }
.num { width: 24px; padding-right: 4px; text-align: right; font-size: 13px; color: #999; }
.lab { position: relative; z-index: 1; flex: 1; border-radius: 12px; text-align: center; white-space: nowrap; }
.node i { position: absolute; width: 20px; height: 10px; }
.in { top: -10px; border-radius: 10px 10px 0 0; background: linear-gradient(#fbeafb, #a59ca5); }
.out, .alt { top: 23px; border-radius: 0 0 10px 10px; background: #f56000; }
.node .alt { background: #f0c000; }
.node .off { background: #999; }
.n1 { left: 81px; top: 81px; width: 95px; }
.n1 .lab { background: #a9c8ff; color: #333; }
.n1 .num, .n2 .num, .n3 .num { width: 17px; }
.n1 .in, .n1 .out { left: 37px; }
.n1 .alt { left: 61px; }
.n2 { left: 0; top: 200px; width: 93px; }
.n2 .lab { background: #008000; color: #fff; font-weight: 700; }
.n2 .in, .n2 .out { left: 36px; }
.n2 .alt { left: 60px; }
.n3 { left: 138px; top: 206px; width: 90px; }
.n3 .lab { background: #f00; color: #fff; font-weight: 700; }
.n3 .in, .n3 .out { left: 35px; }
.n3 .alt { left: 57px; }
.n16 { left: 725px; top: 81px; width: 144px; }
.n16 .lab { background: #c0c; color: #fff; font-weight: 700; }
.n16 .in, .n16 .out { left: 62px; }
.n16 .alt { left: 98px; }
.n14 { left: 738px; top: 143px; width: 122px; }
.n14 .lab { background: #ff8cff; color: #333; }
.n14 .in, .n14 .out { left: 51px; }
.n14 .alt { left: 81px; }
.n15 { left: 738px; top: 212px; width: 126px; }
.n15 .lab { background: #4682b4; color: #fff; }
.n15 .in, .n15 .out { left: 53px; }

/* desktop taskbar */
.taskbar { height: 60px; display: flex; align-items: center; color: #fff; border-top: 1px solid #4a5560; background: linear-gradient(90deg, #2a1f47 0, #1f2646 12%, #182c40 27%, #17302f 40%, #163024 70%, #16301f); }
.widget { position: relative; width: 309px; display: flex; align-items: center; gap: 10px; padding-left: 26px; text-align: left; font-size: 14px; line-height: 20px; color: #fff; }
.widget small { display: block; font-size: 14px; color: #c4c4cf; }
.widget b { position: absolute; left: 44px; top: 2px; font-weight: 400; font-size: 13px; line-height: 20px; }
.start { width: 30px; }
.search { width: 273px; height: 38px; margin-left: 18px; display: flex; align-items: center; gap: 11px; padding: 0 6px 0 13px; border-radius: 19px; background: #f1f3f4; }
.search input { flex: 1; min-width: 0; border: 0; padding: 0; background: none; font: 16px/24px "Open Sans", sans-serif; }
.search input::placeholder { color: #5a5a5a; opacity: 1; }
.apps { display: flex; flex: none; gap: 5px; margin-left: 6px; }
.app { position: relative; width: 50px; height: 50px; display: flex; align-items: center; justify-content: center; border-radius: 5px; }
.app svg { width: 30px; height: 30px; }
.wide svg { width: 36px; margin-left: 6px; }
.app b { position: absolute; right: 0; top: 3px; width: 20px; height: 20px; border-radius: 10px; background: #4cc2ff; color: #111; font-weight: 400; font-size: 13px; line-height: 20px; }
.cur { background: #ffffff18; box-shadow: inset 0 0 1px #ffffff60; }
.run::after, .cur::after { content: ""; position: absolute; bottom: 1px; left: 21px; width: 8px; height: 4px; border-radius: 2px; background: #9aa39e; }
.cur::after { left: 15px; width: 20px; background: #4cc2ff; }
.tray { flex: 1; display: flex; justify-content: flex-end; align-items: center; gap: 10px; padding-right: 26px; }
.tray svg:first-child { margin-right: 12px; }
.tray time { width: 86px; text-align: right; font-size: 14px; line-height: 20px; }
```
